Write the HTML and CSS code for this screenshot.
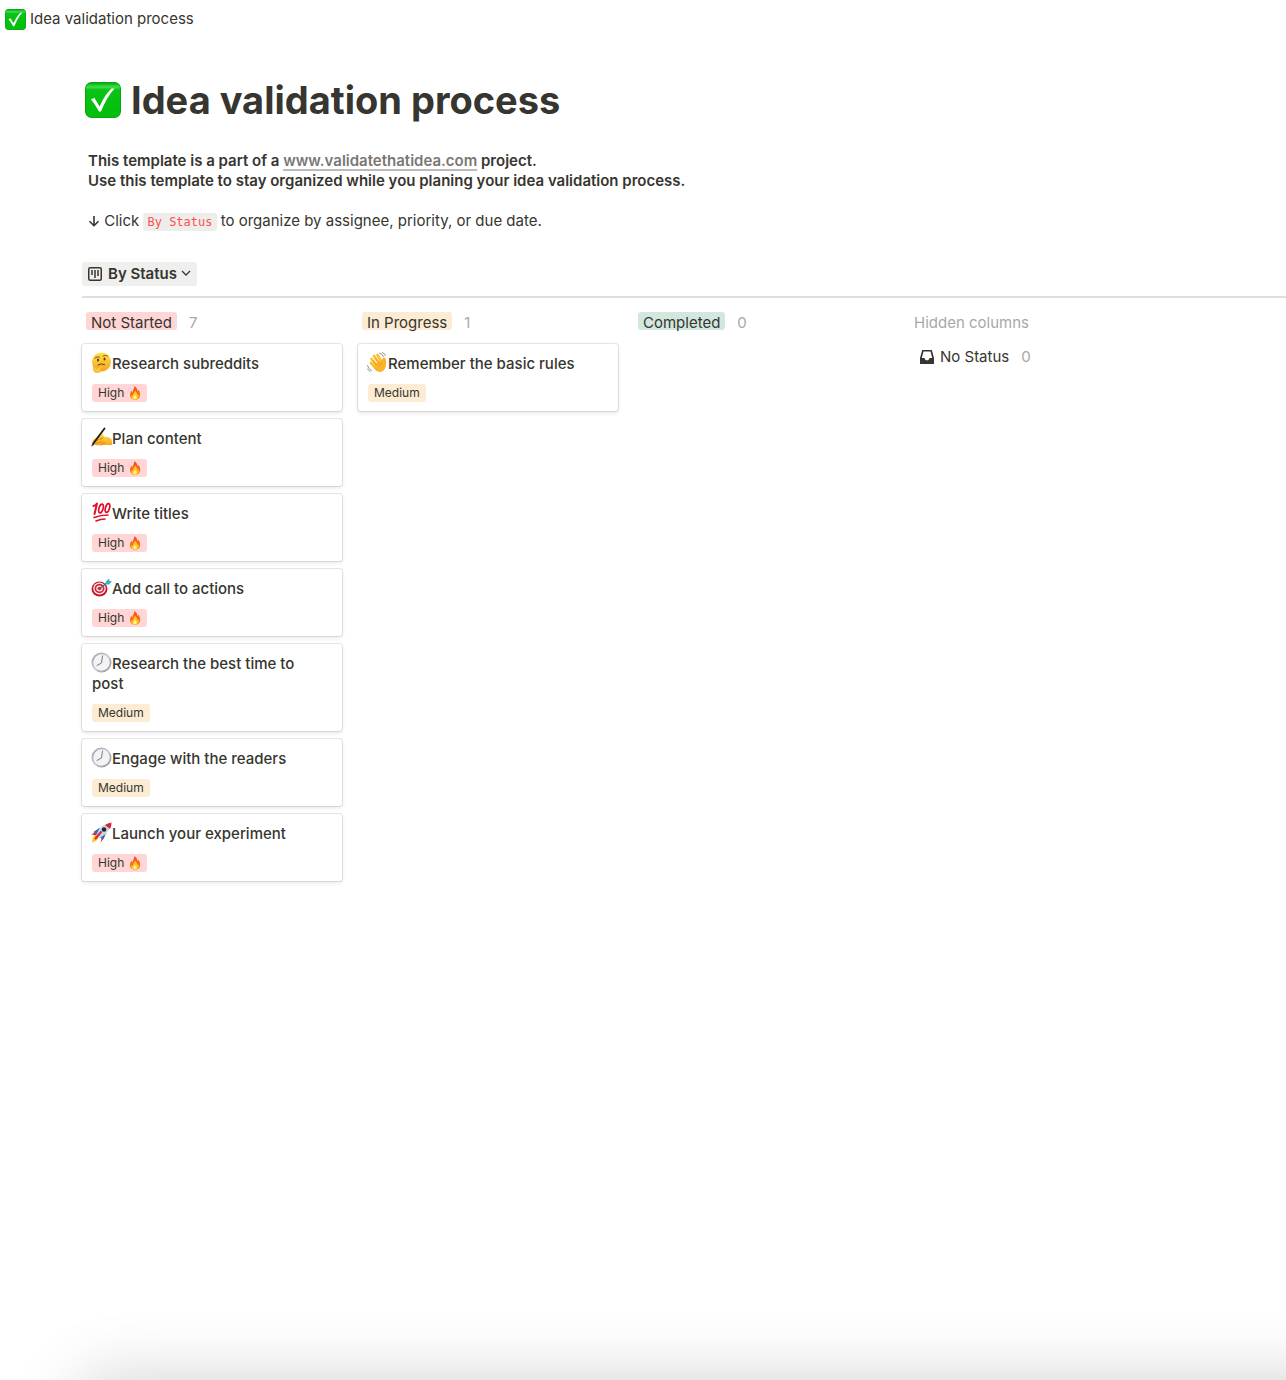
FILE: index.html
```html
<!DOCTYPE html>
<html lang="en">

<head>
    <meta charset="utf-8">
    <meta name="viewport" content="width=device-width, initial-scale=1">
    <title>Idea validation process</title>
    <link rel="stylesheet" href="styles.css">
</head>

<body>
    <!-- shared icons -->
    <svg class="sprite" aria-hidden="true">
        <defs>
            <linearGradient id="green" x1="0" y1="0" x2="0" y2="1">
                <stop offset="0" stop-color="#08ab15" />
                <stop offset="0.12" stop-color="#3fe04c" />
                <stop offset="0.2" stop-color="#08c414" />
                <stop offset="1" stop-color="#04bd0c" />
            </linearGradient>
            <linearGradient id="yellow" x1="0" y1="0" x2="0" y2="1">
                <stop offset="0" stop-color="#ffe04a" />
                <stop offset="1" stop-color="#f7a321" />
            </linearGradient>
            <linearGradient id="flame" x1="0" y1="0" x2="0" y2="1">
                <stop offset="0" stop-color="#f4451d" />
                <stop offset="1" stop-color="#ff8a12" />
            </linearGradient>
            <linearGradient id="rim" x1="0" y1="0" x2="1" y2="1">
                <stop offset="0" stop-color="#9a9ba6" />
                <stop offset="0.5" stop-color="#c9cad2" />
                <stop offset="1" stop-color="#85868f" />
            </linearGradient>
        </defs>

        <symbol id="check" viewBox="0 0 36 36">
            <rect width="36" height="36" rx="6.5" fill="#07a80f" />
            <rect x="1" y="1" width="34" height="34" rx="5.5" fill="url(#green)" />
            <path d="M6 17.500 9.300 15.700 14.600 24.500C18 16.500 22 10.500 26.500 6.500L29.500 6.500C23.500 13.500 19.500 20.500 16 29.600L14 29.600C11.500 25 9 21 6 17.500Z" fill="#fff" />
        </symbol>

        <symbol id="fire" viewBox="0 0 24 28">
            <path d="M11 0c5 4 6 7 6 11 1-1 1.500-2 1.500-4C22 12 23 16 22 20c-1 5-4 7.500-10 7.500S2 24 2 19c0-4 1-7 3-10 .3 2 1 3 2 4C7 8 11 5 11 0z" fill="url(#flame)" />
            <path d="M12 9c4 5 5 7 5 10 1-.5 1.500-1.500 2-3 1 6-1 11-7 11s-8-4-7-9c.6 1.500 1 2 2 2.500C7 16 12 13 12 9z" fill="#ffc91f" />
            <path d="M12 18c3 3 4 5 3 7-1 2-5 2-6 0s1-4 3-7z" fill="#fff3a0" />
        </symbol>

        <symbol id="thinking" viewBox="0 0 42 42">
            <circle cx="21" cy="20" r="19" fill="url(#yellow)" />
            <path d="M8 12q4-4 9-2M24 8q5-3 9 0" fill="none" stroke="#8a5410" stroke-width="2" stroke-linecap="round" />
            <ellipse cx="14" cy="16" rx="2" ry="3" fill="#573309" />
            <ellipse cx="27" cy="14" rx="2" ry="3" fill="#573309" />
            <path d="M14 26q6-4 13-1" fill="none" stroke="#6b3d0b" stroke-width="2" stroke-linecap="round" />
            <path d="M5 28c3 0 4 2 5 5l12-5c3-1 4 2 1 4l-5 3c3 0 3 3 0 5-4 3-11 2-13-3z" fill="#fdc637" stroke="#e89a25" stroke-width="1" />
        </symbol>

        <symbol id="writing" viewBox="0 0 42 42">
            <path d="M4 26 19 14c5-2 8 0 5 5l9 1c5 1 9 4 9 8v8H24C16 37 8 37 4 34c-2-3-2-5 0-8z" fill="url(#yellow)" />
            <path d="M11 28l10-6M10 33l14-4M20 36l8-5M25 20l-6 5" fill="none" stroke="#d88412" stroke-width="1.600" stroke-linecap="round" />
            <path d="M4 34 27 3" stroke="#1b1b1d" stroke-width="3.600" stroke-linecap="round" />
            <path d="M0 39l3-6 3 3z" fill="#333" />
        </symbol>

        <symbol id="hundred" viewBox="0 0 42 42">
            <g fill="none" stroke="#e0102b" stroke-linecap="round" stroke-linejoin="round">
                <path d="M5 8q4-1 7-5L7 24" stroke-width="4" />
                <ellipse cx="20" cy="13" rx="4" ry="9" transform="rotate(16 20 13)" stroke-width="3.400" />
                <ellipse cx="33" cy="12" rx="4" ry="9" transform="rotate(16 33 12)" stroke-width="3.400" />
                <path d="M6 31q14-5 28-5M10 38q9-4 18-4" stroke-width="3.200" />
            </g>
        </symbol>

        <symbol id="target" viewBox="0 0 42 42">
            <ellipse cx="17" cy="24" rx="16" ry="15" fill="#c4182a" />
            <ellipse cx="17" cy="23" rx="12.500" ry="12" fill="#f6eded" />
            <ellipse cx="17" cy="23" rx="10" ry="9.500" fill="#d9243a" />
            <ellipse cx="17" cy="23" rx="6.500" ry="6" fill="#f6eded" />
            <ellipse cx="17" cy="23" rx="4" ry="3.500" fill="#d9243a" />
            <path d="M17 23 32 12" stroke="#386e7d" stroke-width="2.400" />
            <path d="M28 15 30 9l6-6 1 5 5 1-6 6z" fill="#2fb4c8" />
        </symbol>

        <symbol id="clock" viewBox="0 0 42 42">
            <circle cx="21" cy="21" r="20" fill="url(#rim)" />
            <circle cx="21" cy="21" r="16.500" fill="#f3f3f6" />
            <path d="M23 8 21 22 12 27" fill="none" stroke="#777982" stroke-width="2" stroke-linecap="round" stroke-linejoin="round" />
        </symbol>

        <symbol id="rocket" viewBox="0 0 42 42">
            <path d="M10 26C4 29 2 34 2 41c6-2 11-4 13-10z" fill="#ffc61b" />
            <path d="M12 18 1 25l9 2zM22 29l-3 12 9-12z" fill="#d7263a" />
            <path d="M18 11 5 20l7 6zM31 21l-7 14-7-5z" fill="#2a6cb5" />
            <path d="M11 26C14 14 24 4 38 3c1 12-8 23-21 29z" fill="#c5d4e2" />
            <path d="M28 6Q33 2 41 1q0 8-3 13z" fill="#dc2338" />
            <circle cx="26" cy="15" r="4.500" fill="#22252f" />
            <path d="M20 20 9 33" stroke="#dc2338" stroke-width="4" stroke-linecap="round" />
        </symbol>

        <symbol id="wave" viewBox="0 0 42 42">
            <g fill="none" stroke="#fcc02f" stroke-width="5.400" stroke-linecap="round">
                <path d="M9 14 22 30M14 8 26 25M21 6 31 23M8 22 20 35" />
            </g>
            <path d="M17 24 29 17c2-1 2-6 5-6 4 0 5 6 4 13 0 9-5 15-11 16-6 0-9-3-13-8z" fill="#fab32a" />
            <path d="M11 17l9 10M16 12l9 12M25 29q1-5 5-6" fill="none" stroke="#dc8c16" stroke-width="1.200" />
            <path d="M1 27q1 7 8 10M1 34q2 4 5 5M25 2q6 1 8 7M31 1q5 2 6 6" fill="none" stroke="#77787c" stroke-width="1.600" stroke-linecap="round" />
        </symbol>
    </svg>

    <nav class="topbar" aria-label="Breadcrumb">
        <svg class="emoji" aria-hidden="true"><use href="#check" /></svg>
        <span>Idea validation process</span>
    </nav>

    <main class="page">
        <h1 class="page-title">
            <svg class="title-icon" aria-hidden="true"><use href="#check" /></svg>
            <span>Idea validation process</span>
        </h1>

        <div class="intro">
            <p class="lead">This template is a part of a <a href="#">www.validatethatidea.com</a> project.<br>
                Use this template to stay organized while you planing your idea validation process.</p>
            <p>
                <svg class="arrow" viewBox="0 0 12 12" aria-hidden="true"><path d="M6 1v9.500M1.500 6.200 6 10.700l4.500-4.500" /></svg>
                Click <code>By Status</code> to organize by assignee, priority, or due date.
            </p>
        </div>

        <div class="views">
            <button class="view-button" type="button">
                <svg class="board-icon" viewBox="0 0 14 14" aria-hidden="true">
                    <rect x="0.750" y="0.750" width="12.500" height="12.500" rx="1.500" />
                    <path d="M4 3v5M7 3v8M10 3v6" />
                </svg>
                <span>By Status</span>
                <svg class="chevron" viewBox="0 0 10 10" aria-hidden="true"><path d="M1 2l4 4 4-4" /></svg>
            </button>
        </div>

        <div class="board">
            <section class="column">
                <header class="column-header">
                    <h2 class="status red">Not Started</h2>
                    <span class="count">7</span>
                </header>
                <article class="card">
                    <h3><svg class="emoji" aria-hidden="true"><use href="#thinking" /></svg>Research subreddits</h3>
                    <span class="tag red">High <svg class="fire" aria-hidden="true"><use href="#fire" /></svg></span>
                </article>
                <article class="card">
                    <h3><svg class="emoji" aria-hidden="true"><use href="#writing" /></svg>Plan content</h3>
                    <span class="tag red">High <svg class="fire" aria-hidden="true"><use href="#fire" /></svg></span>
                </article>
                <article class="card">
                    <h3><svg class="emoji" aria-hidden="true"><use href="#hundred" /></svg>Write titles</h3>
                    <span class="tag red">High <svg class="fire" aria-hidden="true"><use href="#fire" /></svg></span>
                </article>
                <article class="card">
                    <h3><svg class="emoji" aria-hidden="true"><use href="#target" /></svg>Add call to actions</h3>
                    <span class="tag red">High <svg class="fire" aria-hidden="true"><use href="#fire" /></svg></span>
                </article>
                <article class="card">
                    <h3><svg class="emoji" aria-hidden="true"><use href="#clock" /></svg>Research the best time to post</h3>
                    <span class="tag yellow">Medium</span>
                </article>
                <article class="card">
                    <h3><svg class="emoji" aria-hidden="true"><use href="#clock" /></svg>Engage with the readers</h3>
                    <span class="tag yellow">Medium</span>
                </article>
                <article class="card">
                    <h3><svg class="emoji" aria-hidden="true"><use href="#rocket" /></svg>Launch your experiment</h3>
                    <span class="tag red">High <svg class="fire" aria-hidden="true"><use href="#fire" /></svg></span>
                </article>
            </section>

            <section class="column">
                <header class="column-header">
                    <h2 class="status yellow">In Progress</h2>
                    <span class="count">1</span>
                </header>
                <article class="card">
                    <h3><svg class="emoji" aria-hidden="true"><use href="#wave" /></svg>Remember the basic rules</h3>
                    <span class="tag yellow">Medium</span>
                </article>
            </section>

            <section class="column">
                <header class="column-header">
                    <h2 class="status green">Completed</h2>
                    <span class="count">0</span>
                </header>
            </section>

            <section class="column">
                <header class="column-header">
                    <h2 class="hidden-title">Hidden columns</h2>
                </header>
                <div class="hidden-item">
                    <svg class="inbox-icon" viewBox="0 0 14 14" aria-hidden="true">
                        <path fill-rule="evenodd" d="M2.200 0h9.600L14 8v6H0V8zM3.500 1.600 1.800 8H4.500c.3 1.500 1.200 2.300 2.500 2.300S9.200 9.500 9.500 8h2.700L10.500 1.600z" />
                    </svg>
                    <span>No Status</span>
                    <span class="count">0</span>
                </div>
            </section>
        </div>
    </main>

    <div class="bottom-shade"></div>
</body>

</html>
```

FILE: styles.css
```css
* {
    box-sizing: border-box;
}

body {
    margin: 0;
    background-color: #fff;
    color: #37352f;
    font-family: Inter, "Liberation Sans", sans-serif;
    font-size: 15px;
    line-height: 20px;
}

h1, h2, h3, p {
    margin: 0;
    font-size: inherit;
}

.sprite {
    position: absolute;
    width: 0;
    height: 0;
}

.emoji {
    width: 21px;
    height: 21px;
}

.topbar {
    display: flex;
    align-items: center;
    gap: 4px;
    height: 38px;
    padding-left: 5px;
}

.page {
    padding: 0 0 80px 82px;
}

.page-title {
    display: flex;
    align-items: center;
    gap: 10px;
    padding: 38px 3px 0;
    font-size: 38px;
    line-height: 48px;
    font-weight: 700;
}

.title-icon {
    width: 36px;
    height: 36px;
}

.intro {
    display: flex;
    flex-direction: column;
    gap: 20px;
    padding: 27px 6px 0;
}

.lead {
    font-weight: 600;

    a {
        color: #787774;
        text-decoration: underline;
        text-decoration-color: #bcbbb9;
        text-decoration-thickness: 2px;
        text-underline-offset: 3px;
    }
}

.arrow {
    width: 12px;
    height: 12px;
    vertical-align: -1px;
    fill: none;
    stroke: #37352f;
    stroke-width: 1.6;
}

code {
    padding: 2px 4px;
    border-radius: 3px;
    background-color: #ededec;
    color: #ff4f4f;
    font-family: "DejaVu Sans Mono", monospace;
    font-size: 12px;
}

.views {
    padding: 30px 0 10px;
    border-bottom: 2px solid #dfdfde;
}

.view-button {
    display: flex;
    align-items: center;
    gap: 6px;
    height: 24px;
    padding: 0 6px;
    border: 0;
    border-radius: 3px;
    background-color: #efefee;
    color: inherit;
    font: inherit;
    font-weight: 600;
    cursor: pointer;
}

.board-icon {
    width: 14px;
    height: 14px;
    fill: none;
    stroke: #37352f;
    stroke-width: 1.5;
}

.chevron {
    width: 10px;
    height: 10px;
    margin-left: -2px;
    fill: none;
    stroke: #37352f;
    stroke-width: 1.3;
}

.board {
    display: flex;
    gap: 16px;
    padding-top: 14px;
}

.column {
    display: flex;
    flex-direction: column;
    flex: 0 0 260px;
    gap: 8px;
}

.column-header {
    display: flex;
    align-items: flex-start;
    gap: 12px;
    height: 24px;
    padding-left: 4px;
}

.status {
    height: 18px;
    padding: 1px 5px;
    border-radius: 3px;
    font-weight: 400;
}

.red {
    background-color: #ffd5d5;
}

.yellow {
    background-color: #fcecd3;
}

.green {
    background-color: #d2e8df;
}

.count,
.hidden-title {
    padding-top: 1px;
    color: #a9a8a6;
    font-weight: 400;
}

.card {
    padding: 10px 16px 9px 10px;
    border-radius: 3px;
    background-color: #fff;
    box-shadow: 0 0 0 1px rgba(15, 15, 15, 0.1), 0 2px 4px rgba(15, 15, 15, 0.1);

    h3 {
        margin-bottom: 10px;
        font-weight: 500;
    }

    .emoji {
        margin: -4px 0 -4px -1px;
        vertical-align: 0;
    }
}

.tag {
    display: flex;
    align-items: center;
    gap: 5px;
    width: fit-content;
    height: 18px;
    padding: 0 6px;
    border-radius: 3px;
    font-size: 12px;
}

.fire {
    width: 12px;
    height: 14px;
}

.hidden-item {
    display: flex;
    align-items: center;
    gap: 6px;
    height: 26px;
    padding-left: 10px;

    .count {
        padding: 0 0 0 6px;
    }
}

.inbox-icon {
    width: 14px;
    height: 14px;
    fill: #37352f;
}

/* soft shade rising from the lower edge of the window */
.bottom-shade {
    position: fixed;
    top: 100%;
    left: 82px;
    right: -100px;
    height: 200px;
    box-shadow: 0 0 68px rgba(0, 0, 0, 0.19);
    pointer-events: none;
}
```
